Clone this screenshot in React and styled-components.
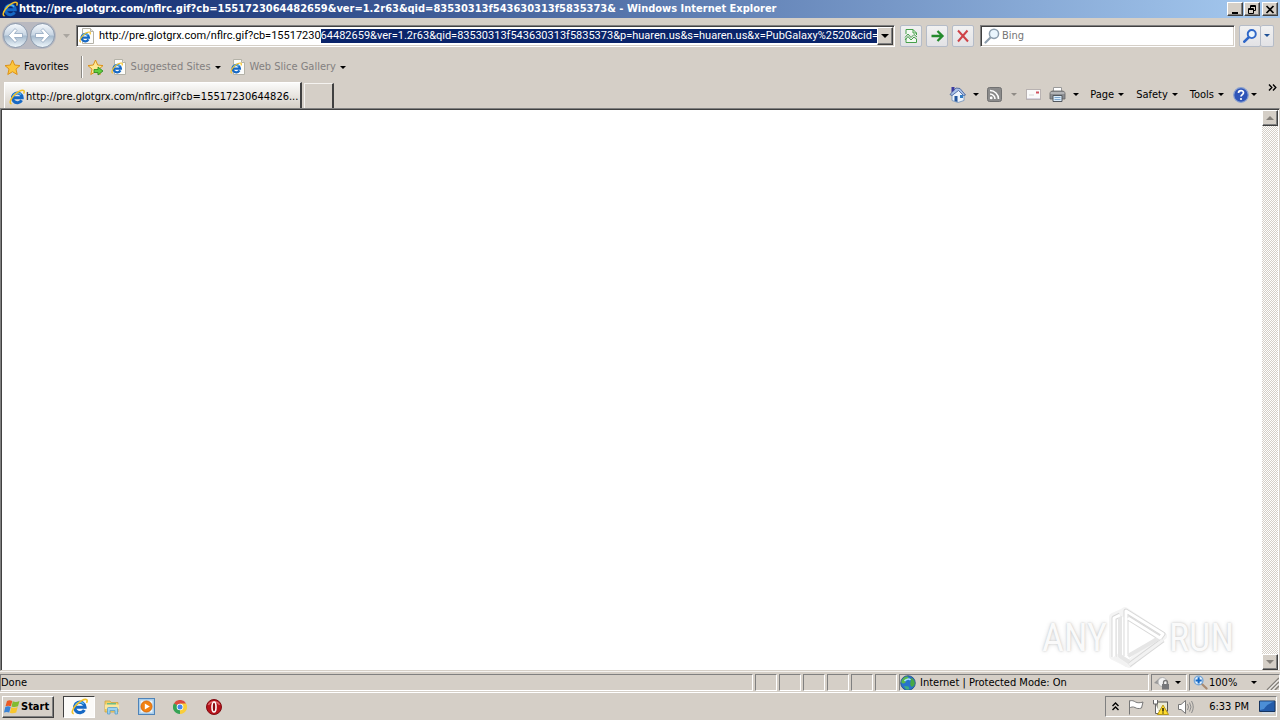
import React, { useLayoutEffect, useRef } from 'react';
import styled, { createGlobalStyle, css } from 'styled-components';

const face = '#d5cfc7';
const shadow = '#808080';
const dark = '#404040';

const Global = createGlobalStyle`
  * { box-sizing: border-box; }
  body { margin: 0; background: ${face}; overflow: hidden; }
  body, button, input {
    font-family: "DejaVu Sans Condensed", "DejaVu Sans", sans-serif;
    font-size: 11px;
    line-height: 14px;
    color: #000;
  }
  button { margin: 0; padding: 0; border: 0; background: none; }
  svg { display: block; flex: none; }
`;

const raised = css`
  background: ${face};
  border: 1px solid;
  border-color: #fff ${dark} ${dark} #fff;
  box-shadow: inset -1px -1px 0 ${shadow};
`;

const Window = styled.div`
  display: flex;
  flex-direction: column;
  min-height: 100vh;
  white-space: nowrap;
`;

/* Title bar */
const TitleBar = styled.header`
  display: flex;
  align-items: center;
  gap: 1px;
  height: 18px;
  padding: 0 2px 0 2px;
  background: linear-gradient(90deg, #0a246a, #a6caf0);
`;
const Title = styled.h1`
  flex: 1;
  min-width: 0;
  margin: 0;
  overflow: hidden;
  color: #fff;
  font-size: 11px;
  line-height: 16px;
  font-weight: bold;
`;
const CaptionButton = styled.button`
  ${raised}
  display: grid;
  place-items: center;
  width: 16px;
  height: 14px;
  margin-left: ${(p) => (p.$spaced ? 1 : 0)}px;
`;

/* Navigation row */
const NavRow = styled.div`
  display: flex;
  align-items: center;
  height: 35px;
  padding: 0 6px 0 2px;
`;
const BackForward = styled.div`
  display: flex;
  gap: 2px;
  padding: 1px;
  border-radius: 14px;
  background: #b9b9c0;
`;
const RoundButton = styled.button`
  display: grid;
  place-items: center;
  width: 25px;
  height: 25px;
  border: 1px solid #8c9bae;
  border-radius: 50%;
  background: linear-gradient(#f4f8fc, #c7d5e3 48%, #a5bacd 52%, #eef6fb);
`;
const HistoryButton = styled.button`
  display: grid;
  place-items: center;
  width: 20px;
  height: 20px;
`;
const Field = styled.div`
  display: flex;
  align-items: center;
  height: 22px;
  padding: 1px;
  background: #fff;
  border: 1px solid;
  border-color: ${shadow} #fff #fff ${shadow};
  box-shadow: inset 1px 1px 0 ${dark}, inset -1px -1px 0 ${face};
`;
const AddressField = styled(Field)`
  flex: 1;
  min-width: 0;
  margin-right: 5px;
  padding-left: 2px;
`;
const AddressInput = styled.input`
  flex: 1;
  min-width: 0;
  height: 14px;
  margin-left: 4px;
  padding: 0;
  border: 0;
  outline: 0;
  background: transparent;
  font-family: Roboto, sans-serif;
  caret-color: transparent;
  &::selection { background: #0a246a; color: #fff; }
`;
const DropButton = styled.button`
  ${raised}
  display: grid;
  place-items: center;
  width: 16px;
  height: 18px;
`;
const ToolButton = styled.button`
  display: grid;
  place-items: center;
  width: ${(p) => p.$width || 22}px;
  height: 22px;
  margin-right: ${(p) => (p.$joined ? 0 : 4)}px;
  border: 1px solid #b5bcc8;
  border-left-width: ${(p) => (p.$tail ? 0 : 1)}px;
  border-radius: 2px;
  background: linear-gradient(#f1f1f1, #e2e2e5);
`;
const SearchField = styled(Field)`
  width: 255px;
  margin: 0 4px 0 2px;
  padding-left: 3px;
`;
const SearchInput = styled.input`
  flex: 1;
  min-width: 0;
  height: 16px;
  padding: 0 2px;
  border: 0;
  outline: 0;
  background: transparent;
  &::placeholder { color: #757575; opacity: 1; }
`;

/* Favorites row */
const FavoritesRow = styled.nav`
  display: flex;
  align-items: center;
  height: 28px;
  padding-left: 4px;
`;
const TextButton = styled.button`
  display: flex;
  align-items: center;
  gap: ${(p) => p.$gap || 4}px;
  color: ${(p) => (p.$muted ? '#838080' : '#000')};
`;
const Divider = styled.span`
  width: 2px;
  height: 22px;
  margin: 0 4px 0 12px;
  border-left: 1px solid #8b8883;
  border-right: 1px solid #fff;
`;
const Links = styled.div`
  display: flex;
  align-items: center;
  margin-left: 7px;
  gap: 9px;
`;

/* Tab row */
const TabRow = styled.div`
  display: flex;
  align-items: flex-end;
  height: 27px;
  padding: 0 3px 0 4px;
`;
const Tab = styled.button`
  display: flex;
  align-items: center;
  gap: 1px;
  width: 298px;
  height: 26px;
  padding: 2px 0 0 4px;
  overflow: hidden;
  border: 1px solid;
  border-width: 1px 2px 0 1px;
  border-color: #fff ${dark} #fff #fff;
  background: linear-gradient(#fbfbfa, ${face});
`;
const NewTab = styled.button`
  width: 30px;
  height: 25px;
  margin-left: 2px;
  border: 1px solid;
  border-width: 1px 2px 0 1px;
  border-color: #f5f3f0 ${dark} #fff #f5f3f0;
`;
const Commands = styled.div`
  display: flex;
  align-items: center;
  height: 27px;
  margin-left: auto;
`;
const Command = styled(TextButton)`
  gap: ${(p) => p.$gap || 4}px;
  margin-right: ${(p) => p.$after || 0}px;
`;
const MoreButton = styled.button`
  align-self: flex-start;
  margin-top: 3px;
`;

/* Page area */
const Viewport = styled.main`
  display: flex;
  flex: 1;
  min-height: 300px;
  border: 1px solid;
  border-color: ${shadow} ${face} ${face} ${shadow};
  box-shadow: inset 1px 1px 0 ${dark};
  padding: 1px 1px 0 1px;
  background: #fff;
`;
const Page = styled.div`
  display: flex;
  flex: 1;
  align-items: flex-end;
  justify-content: flex-end;
`;
const Watermark = styled.div`
  display: flex;
  align-items: center;
  gap: 2px;
  padding-right: 28px;
  color: #fafafa;
  font-family: "Roboto Condensed", Roboto, sans-serif;
  font-size: 38px;
  line-height: 60px;
  text-shadow: 0 0 2px #c4c4c4, 0 0 5px #dcdcdc;
`;
const ScrollBar = styled.div`
  display: flex;
  flex-direction: column;
  justify-content: space-between;
  width: 16px;
  background: repeating-conic-gradient(${face} 0 25%, #fff 0 50%) 0 0 / 2px 2px;
`;
const ScrollButton = styled.button`
  ${raised}
  display: grid;
  place-items: center;
  height: 16px;
`;

/* Status bar */
const StatusBar = styled.footer`
  display: grid;
  grid-template-columns: 1fr repeat(6, 22px) 250px 36px 91px;
  gap: 2px;
  height: 22px;
  padding: 2px 0 1px;
  border-bottom: 1px solid #fff;
  border-top: 1px solid #f4f2ef;
`;
const Pane = styled.div`
  display: flex;
  align-items: center;
  gap: ${(p) => p.$gap || 2}px;
  padding-left: ${(p) => p.$pad || 0}px;
  overflow: hidden;
  border: 1px solid;
  border-color: ${shadow} #fff #fff ${shadow};
`;
const ZoomButton = styled.button`
  display: flex;
  flex: 1;
  align-items: center;
  justify-content: space-between;
`;
const Grip = styled.span`
  align-self: flex-end;
  margin-left: 8px;
`;

/* Taskbar */
const TaskBar = styled.footer`
  display: flex;
  align-items: center;
  height: 27px;
  padding: 0 3px 0 2px;
`;
const StartButton = styled.button`
  ${raised}
  display: flex;
  align-items: center;
  gap: 1px;
  width: 52px;
  height: 22px;
  margin-right: 9px;
  padding-left: 1px;
  font-weight: bold;
`;
const TaskButton = styled.button`
  display: grid;
  place-items: center;
  width: ${(p) => (p.$active ? 32 : 34)}px;
  height: 22px;
  ${(p) =>
    p.$active &&
    css`
      border: 1px solid;
      border-color: ${dark} #fff #fff ${dark};
      background: #fbfaf8;
    `}
`;
const Tray = styled.div`
  display: flex;
  align-items: center;
  width: 172px;
  height: 21px;
  margin-left: auto;
  padding: 0 0 0 6px;
  border: 1px solid;
  border-color: ${shadow} #fff #fff ${shadow};
`;
const TrayIcons = styled.div`
  display: flex;
  align-items: center;
  gap: 8px;
`;
const Clock = styled.time`
  margin: 0 10px 0 auto;
`;

const Caret = ({ color = '#000', size = 6, up }) => (
  <svg width={size} height={size > 6 ? 4 : 3} viewBox="0 0 6 3" preserveAspectRatio="none" aria-hidden="true">
    <path d={up ? 'M0 3H6L3 0Z' : 'M0 0H6L3 3Z'} fill={color} />
  </svg>
);

const IeGlyph = () => (
  <g fill="none">
    <path d="M12.600 11.200A4.900 4.900 0 1 1 13.200 8.700H5" stroke="#1668c4" strokeWidth="3" />
    <path d="M4 8A4.600 4.600 0 0 1 12 5.600" stroke="#4fb4f2" strokeWidth="1.600" />
    <path d="M2.600 14.800C.3 14.600 1 11 4 7.500 7.500 3.300 13 .2 14.900 1.700 15.500 2.500 15.200 3.500 14.600 4.600" stroke="#f3c126" strokeWidth="1.500" />
  </g>
);
const IeIcon = ({ size = 16 }) => (
  <svg width={size} height={size} viewBox="0 0 16 16" aria-hidden="true"><IeGlyph /></svg>
);
const IePage = () => (
  <svg width="16" height="16" viewBox="0 0 16 16" aria-hidden="true">
    <path d="M3.500 .5H11.500L14.500 3.500V15.500H3.500Z" fill="#fdfdfb" stroke="#b4b2a8" />
    <path d="M11.500 .5V3.500H14.500" fill="#e8e5da" stroke="#b4b2a8" />
    <g transform="translate(0 3) scale(.75)"><IeGlyph /></g>
  </svg>
);
const Arrow = ({ flip }) => (
  <svg width="17" height="17" viewBox="0 0 17 17" aria-hidden="true">
    <path
      transform={flip ? 'translate(17 0) scale(-1 1)' : undefined}
      d="M8 1.500 1.500 8.500 8 15.500 10 13.500 7.500 10.500H15.500V6.500H7.500L10 3.500Z"
      fill="#fff" stroke="#8fa5be" strokeWidth=".8"
    />
  </svg>
);
const Star = ({ add }) => (
  <svg width="17" height="17" viewBox="0 0 17 17" aria-hidden="true">
    <path d="M8.500 1 10.700 6 16 6.600 12 10.100 13.200 15.500 8.500 12.700 3.800 15.500 5 10.100 1 6.600 6.300 6Z"
      fill={add ? '#fde795' : '#fcc63d'} stroke="#dd9218" strokeLinejoin="round" />
    {add && <path d="M7 10.500H11V8L16 12 11 16V13.500H7Z" fill="#62cf3e" stroke="#29861c" strokeWidth=".8" />}
  </svg>
);
const Lens = ({ color = '#8d9eae', fill = '#eaf5fd', size = 16, plus, bold }) => (
  <svg width={size} height={size} viewBox="0 0 16 16" aria-hidden="true">
    <g transform={plus ? 'translate(16 0) scale(-1 1)' : undefined}>
      <path d="M6.500 9.500 1.500 14.500" stroke={plus ? '#a98a70' : color} strokeWidth={bold ? 3 : 2.2} strokeLinecap="round" />
      <circle cx="10" cy="5.800" r="4.600" fill={fill} stroke={color} strokeWidth={bold ? 2.2 : 1.5} />
    </g>
    {plus && <path d="M6 2.500V9.100M2.700 5.800H9.300" stroke="#1468c6" strokeWidth="2.200" />}
  </svg>
);
const Compat = () => (
  <svg width="14" height="16" viewBox="0 0 14 16" fill="none" stroke="#46a04a" aria-hidden="true">
    <path d="M2 6V1.500H9L12.500 5V7M2 10V14.500H12.500V11" fill="#f3faf2" />
    <path d="M9 1.500V5H12.500M1 9.500 4 6 7 9.500 10 6.500 13 9M1 12 4 8.500 7 12 10 9 13 11.500" />
  </svg>
);
const Go = () => (
  <svg width="16" height="16" viewBox="0 0 16 16" fill="none" stroke="#238a2c" strokeWidth="2.300" aria-hidden="true">
    <path d="M2.500 8H13M8.500 3 13.500 8 8.500 13" />
  </svg>
);
const Stop = () => (
  <svg width="14" height="14" viewBox="0 0 14 14" fill="none" stroke="#cf4247" strokeWidth="2" aria-hidden="true">
    <path d="M2 1.500 12 12.500M11.500 1.500 2 12.500" />
  </svg>
);
const Home = () => (
  <svg width="17" height="17" viewBox="0 0 17 17" aria-hidden="true">
    <path d="M3 8V14.500L9 16.500 15 14.500V8L10 3Z" fill="#edf3fb" stroke="#6e8fb9" strokeWidth=".8" />
    <path d="M1 8.500 7 2 11 2.500 16.500 9 14.500 9.500 9.500 4.500 3 9.500Z" fill="#a9c1e8" stroke="#3c5a96" strokeWidth=".8" />
    <path d="M2.500 1H5.500V4L2.500 6.500Z" fill="#3b3aa0" />
    <path d="M5.500 10H8.500V16L5.500 15Z" fill="#24579d" />
    <path d="M11 9H14V12H11Z" fill="#337dc4" />
  </svg>
);
const Feed = () => (
  <svg width="15" height="15" viewBox="0 0 15 15" fill="none" aria-hidden="true">
    <rect x=".5" y=".5" width="14" height="14" rx="2" fill="#8b8b8b" stroke="#717171" />
    <path d="M3 7A5 5 0 0 1 8 12M3 3.500A8.500 8.500 0 0 1 11.500 12" stroke="#fff" strokeWidth="1.600" />
    <circle cx="4.200" cy="10.900" r="1.400" fill="#fff" />
  </svg>
);
const Mail = () => (
  <svg width="15" height="11" viewBox="0 0 15 11" fill="none" aria-hidden="true">
    <rect x=".5" y=".5" width="14" height="10" fill="#fafafa" stroke="#b8b2b1" />
    <path d="M1 9.500H14" stroke="#d7d3df" /><path d="M10 3.500H13" stroke="#d0525f" strokeWidth="2" />
    <path d="M3 6H8" stroke="#d4d4d4" />
  </svg>
);
const Printer = () => (
  <svg width="17" height="17" viewBox="0 0 17 17" aria-hidden="true">
    <path d="M4.500 6V1.500H12.500V6" fill="#fff" stroke="#9a9a9a" />
    <path d="M1 6.500 3 5H14L16 6.500V13H1Z" fill="#8c8e92" stroke="#666" strokeWidth=".8" />
    <path d="M1.500 7H15.500" stroke="#dadada" />
    <path d="M4 9.500H13V15.500H4Z" fill="#dcecf9" stroke="#53585e" />
    <path d="M5.500 11.500H11.500M5.500 13.500H11.500" stroke="#7fa8cf" />
  </svg>
);
const Help = () => (
  <svg width="16" height="16" viewBox="0 0 16 16" aria-hidden="true">
    <circle cx="8" cy="8" r="7.300" fill="#2f55b8" stroke="#8aa1d0" strokeWidth="1.200" />
    <path d="M5.500 6C5.500 2.800 10.500 2.900 10.500 5.800 10.500 7.500 8 7.700 8 9.600" fill="none" stroke="#fff" strokeWidth="1.700" />
    <circle cx="8" cy="12" r="1.100" fill="#fff" />
  </svg>
);
const Chevrons = () => (
  <svg width="9" height="7" viewBox="0 0 9 7" fill="none" stroke="#000" strokeWidth="1.400" aria-hidden="true">
    <path d="M1 .5 3.800 3.500 1 6.500M5 .5 7.800 3.500 5 6.500" />
  </svg>
);
const Globe = () => (
  <svg width="16" height="16" viewBox="0 0 16 16" aria-hidden="true">
    <circle cx="8" cy="8" r="7.300" fill="#2872cc" stroke="#234b7c" strokeWidth=".8" />
    <path d="M2 5C4 1.500 8 .8 8.500 2.500 8 4.500 5 5 5.500 7.500 4 9 1.500 8.500 1.200 7Z" fill="#58b94a" />
    <path d="M10.500 3C13 3 15 6 14.800 9 13.500 12 12 12.500 10.500 10.500 9.500 8 11.500 6 10.500 3Z" fill="#47a843" />
    <path d="M4 11 8.500 11.500 9.500 14.500 6 14.500Z" fill="#3fae7d" />
    <path d="M4.500 6C6 4 9 3.500 10.500 5" stroke="#a6e0ff" strokeWidth="1.500" fill="none" />
  </svg>
);
const Lock = () => (
  <svg width="17" height="14" viewBox="0 0 17 14" aria-hidden="true">
    <path d="M0 7 6 1.500 11 3 7 9Z" fill="#999" /><circle cx="8.500" cy="6" r="4.500" fill="#f2f2f2" stroke="#b0b0b0" />
    <path d="M9.500 8V6.500A2 2 0 0 1 13.500 6.500V8" fill="none" stroke="#777" strokeWidth="1.300" />
    <rect x="8" y="8" width="7" height="5.500" fill="#76777a" />
  </svg>
);
const Windows = () => (
  <svg width="16" height="16" viewBox="0 0 16 16" aria-hidden="true">
    <path d="M3 2C5 .8 6.500 1.200 8.300 2L6.900 7.300C5.200 6.500 3.500 6.500 1.500 7.300Z" fill="#ea5a25" />
    <path d="M8.800 2.300C11 3.300 13 3 15.500 2L14 7.300C11.500 8.300 9.600 8.300 7.500 7.500Z" fill="#82bc32" />
    <path d="M1.300 7.900C3.200 7.100 5 7.100 6.700 7.900L5.200 13.500C3.500 12.700 2 12.700 0 13.500Z" fill="#3a83d6" />
    <path d="M7.300 8.200C9.300 9.100 11.300 8.900 13.700 7.900L12.200 13.500C10 14.500 8 14.500 5.900 13.700Z" fill="#f8c62d" />
  </svg>
);
const Folder = () => (
  <svg width="16" height="16" viewBox="0 0 16 16" aria-hidden="true">
    <path d="M1 2H6L7 3.500H14V13H1Z" fill="#f2cf66" stroke="#cda541" strokeWidth=".8" />
    <path d="M3 4H12V6H3Z" fill="#6dbc85" /><path d="M1 5.500H15V10H1Z" fill="#fbe69b" />
    <path d="M3.500 15V9.500Q3.500 8.500 4.500 8.500H12.500Q13.500 8.500 13.500 9.500V15H11V11.500H6V15Z" fill="#9ad2f0" stroke="#5b9fcb" strokeWidth=".8" />
  </svg>
);
const Media = () => (
  <svg width="17" height="17" viewBox="0 0 17 17" aria-hidden="true">
    <rect x=".5" y=".5" width="16" height="16" fill="#a8cdea" stroke="#4e83b8" />
    <rect x="2.500" y="2.500" width="12" height="12" fill="#e8f3fb" />
    <circle cx="8.500" cy="8.500" r="5.500" fill="#f28212" stroke="#d86a0b" /><path d="M6.800 5.500V11.500L11.800 8.500Z" fill="#fff" />
  </svg>
);
const Chrome = () => (
  <svg width="14" height="14" viewBox="0 0 14 14" aria-hidden="true">
    <path d="M7 7 .9 3.500A7 7 0 0 1 13.100 3.500Z" fill="#dd4b3e" />
    <path d="M7 7 13.100 3.500A7 7 0 0 1 7 14Z" fill="#f9ce3a" />
    <path d="M7 7V14A7 7 0 0 1 .9 3.500Z" fill="#36a355" />
    <path d="M7 3.500H13.100L10.200 8.500Z" fill="#f9ce3a" /><path d="M.9 3.500 4 9 7 7Z" fill="#36a355" />
    <circle cx="7" cy="7" r="3.300" fill="#fff" /><circle cx="7" cy="7" r="2.500" fill="#4587ed" />
  </svg>
);
const Opera = () => (
  <svg width="16" height="16" viewBox="0 0 16 16" aria-hidden="true">
    <circle cx="8" cy="8" r="7.500" fill="#b7131b" stroke="#7f0c12" />
    <path d="M2.500 6A6 5.500 0 0 1 13.500 6" fill="none" stroke="#df6a6d" strokeWidth="1.500" />
    <ellipse cx="8" cy="8" rx="2" ry="5" fill="#8b0c12" stroke="#fff" strokeWidth="1.600" />
  </svg>
);
const TrayChevron = () => (
  <svg width="7" height="9" viewBox="0 0 7 9" fill="none" stroke="#000" strokeWidth="1.400" aria-hidden="true">
    <path d="M.5 4 3.500 1 6.500 4M.5 8 3.500 5 6.500 8" />
  </svg>
);
const Flag = () => (
  <svg width="17" height="16" viewBox="0 0 17 16" aria-hidden="true">
    <path d="M2.500 1.500V15.500M2.500 2C5 1 7 2 8.500 3 10.500 4 13 4 16 3L14.500 9C12 10 9.500 9.500 8 8.500 6 7.500 4 8 2.500 9Z" fill="#fff" stroke="#777" />
  </svg>
);
const Network = () => (
  <svg width="17" height="16" viewBox="0 0 17 16" aria-hidden="true">
    <rect x="5" y="3" width="10.500" height="9" fill="#ecebd5" stroke="#555" />
    <path d="M1.500 1V5H5.500V1M3.500 5V14.500H8" fill="#fff" stroke="#666" />
    <path d="M11 6 16.500 15.500H5.500Z" fill="#ffdc2d" stroke="#a98800" strokeWidth=".8" />
    <path d="M11 9V12.500M11 13.500V14.500" stroke="#000" strokeWidth="1.300" />
  </svg>
);
const Speaker = () => (
  <svg width="17" height="16" viewBox="0 0 17 16" aria-hidden="true">
    <path d="M1.500 5.500H4L8.500 1.500V14.500L4 10.500H1.500Z" fill="#fff" stroke="#777" />
    <path d="M10.500 5Q12.500 8 10.500 11M12.500 3.500Q15.500 8 12.500 12.500M14.500 2Q18 8 14.500 14" fill="none" stroke="#8b8b8b" />
  </svg>
);
const Desktop = () => (
  <svg width="17" height="14" viewBox="0 0 17 14" aria-hidden="true">
    <path d="M.5 1H16V11.500H.5Z" fill="#245ba9" stroke="#16345f" />
    <path d="M1 1.500H15.500C11 3 7 5 5 9L1 10Z" fill="#4c8ed6" /><path d="M3 13H15" stroke="#cfdbe8" strokeWidth="1.500" />
  </svg>
);
const PlayLogo = () => (
  <svg width="58" height="64" viewBox="0 0 58 64" fill="none" strokeLinejoin="round" aria-hidden="true">
    <path d="M16 5 54 30 20 58 4 50V11L13 7Z" stroke="#f4f4f4" strokeWidth="8" />
    <path d="M5 51V12L11 9M17 50V5L54 28 51 32 19 12M20 59 54 34" stroke="#d8d8d8" strokeWidth="5" />
    <path d="M11 10V50L20 56M19 50 50 32" stroke="#e6e6e6" strokeWidth="4" />
    <path d="M5 51V12L11 9M17 50V5L54 28 51 32 19 12" stroke="#fff" strokeWidth="3" />
    <path d="M20 59 54 34M5 51 18 60" stroke="#f2f2f2" strokeWidth="3" />
  </svg>
);
const GripLines = () => (
  <svg width="13" height="13" viewBox="0 0 13 13" stroke="#85817b" strokeWidth="1.500" aria-hidden="true">
    <path d="M1 13 13 1M5 13 13 5M9 13 13 9" />
    <path d="M2.500 13 13 2.500M6.500 13 13 6.500" stroke="#fff" strokeWidth="1" />
  </svg>
);

const URL_START = 'http://pre.glotgrx.com/nflrc.gif?cb=15517230';
const URL_TEXT =
  URL_START + '64482659&ver=1.2r63&qid=83530313f543630313f5835373&p=huaren.us&s=huaren.us&x=PubGalaxy%2520&cid=';

export default function App() {
  const address = useRef(null);

  useLayoutEffect(() => {
    const box = address.current;
    box.focus({ preventScroll: true });
    box.setSelectionRange(URL_START.length, URL_TEXT.length, 'backward');
    box.scrollLeft = 0;
  }, []);

  return (
    <Window>
      <Global />
      <TitleBar>
        <IeIcon />
        <Title>http://pre.glotgrx.com/nflrc.gif?cb=1551723064482659&amp;ver=1.2r63&amp;qid=83530313f543630313f5835373&amp; - Windows Internet Explorer</Title>
        <CaptionButton aria-label="Minimize">
          <svg width="10" height="9" viewBox="0 0 10 9"><path d="M2 7H8V9H2Z" /></svg>
        </CaptionButton>
        <CaptionButton aria-label="Restore">
          <svg width="10" height="9" viewBox="0 0 10 9" fill="none" stroke="#000"><path d="M3.500 3V.5H8.500V5.500H7M3 1.500H9M1.500 3.500H6.500V8.500H1.500ZM1 4.500H7" /></svg>
        </CaptionButton>
        <CaptionButton aria-label="Close" $spaced>
          <svg width="10" height="9" viewBox="0 0 10 9" stroke="#000" strokeWidth="1.700"><path d="M1.500 1 8.500 8M8.500 1 1.500 8" /></svg>
        </CaptionButton>
      </TitleBar>

      <NavRow>
        <BackForward>
          <RoundButton aria-label="Back"><Arrow /></RoundButton>
          <RoundButton aria-label="Forward"><Arrow flip /></RoundButton>
        </BackForward>
        <HistoryButton aria-label="Recent pages"><Caret color="#aaa6a0" size={7} /></HistoryButton>
        <AddressField>
          <IePage />
          <AddressInput ref={address} aria-label="Address" defaultValue={URL_TEXT} spellCheck={false} />
          <DropButton aria-label="Show addresses"><Caret size={8} /></DropButton>
        </AddressField>
        <ToolButton aria-label="Compatibility view"><Compat /></ToolButton>
        <ToolButton aria-label="Go"><Go /></ToolButton>
        <ToolButton aria-label="Stop"><Stop /></ToolButton>
        <SearchField>
          <Lens />
          <SearchInput aria-label="Search" placeholder="Bing" />
        </SearchField>
        <ToolButton aria-label="Search" $joined><Lens color="#2f67c8" size={14} bold /></ToolButton>
        <ToolButton aria-label="Search options" $width={13} $joined $tail><Caret color="#1f5196" /></ToolButton>
      </NavRow>

      <FavoritesRow>
        <TextButton $gap={3}><Star />Favorites</TextButton>
        <Divider />
        <TextButton aria-label="Add to Favorites bar"><Star add /></TextButton>
        <Links>
          <TextButton $muted><IePage />Suggested Sites <Caret /></TextButton>
          <TextButton $muted><IePage />Web Slice Gallery <Caret /></TextButton>
        </Links>
      </FavoritesRow>

      <TabRow>
        <Tab><IeIcon />http://pre.glotgrx.com/nflrc.gif?cb=15517230644826...</Tab>
        <NewTab aria-label="New tab" />
        <Commands>
          <Command aria-label="Home" $gap={7} $after={8}><Home /><Caret /></Command>
          <Command aria-label="Feeds" $gap={9} $after={9}><Feed /><Caret color="#8f8b86" /></Command>
          <Command aria-label="Read mail" $after={8}><Mail /></Command>
          <Command aria-label="Print" $gap={7} $after={11}><Printer /><Caret /></Command>
          <Command $after={12}>Page <Caret /></Command>
          <Command $after={12}>Safety <Caret /></Command>
          <Command $after={9}>Tools <Caret /></Command>
          <Command aria-label="Help" $gap={2} $after={11}><Help /><Caret /></Command>
          <MoreButton aria-label="More commands"><Chevrons /></MoreButton>
        </Commands>
      </TabRow>

      <Viewport>
        <Page>
          <Watermark><span>ANY</span><PlayLogo /><span>RUN</span></Watermark>
        </Page>
        <ScrollBar>
          <ScrollButton aria-label="Scroll up"><Caret up color="#84807a" size={8} /></ScrollButton>
          <ScrollButton aria-label="Scroll down"><Caret color="#84807a" size={8} /></ScrollButton>
        </ScrollBar>
      </Viewport>

      <StatusBar>
        <Pane>Done</Pane>
        <Pane /><Pane /><Pane /><Pane /><Pane /><Pane />
        <Pane $gap={4}><Globe />Internet | Protected Mode: On</Pane>
        <Pane $gap={4} $pad={2}><Lock /><Caret /></Pane>
        <Pane $gap={1} $pad={3}>
          <Lens plus color="#77a7d8" size={15} />
          <ZoomButton>100%<Caret /></ZoomButton>
          <Grip><GripLines /></Grip>
        </Pane>
      </StatusBar>

      <TaskBar>
        <StartButton><Windows />Start</StartButton>
        <TaskButton aria-label="Internet Explorer" $active><IeIcon size={17} /></TaskButton>
        <TaskButton aria-label="File Explorer"><Folder /></TaskButton>
        <TaskButton aria-label="Media Player"><Media /></TaskButton>
        <TaskButton aria-label="Chrome"><Chrome /></TaskButton>
        <TaskButton aria-label="Opera"><Opera /></TaskButton>
        <Tray>
          <TrayIcons><TrayChevron /><Flag /><Network /><Speaker /></TrayIcons>
          <Clock>6:33 PM</Clock>
          <Desktop />
        </Tray>
      </TaskBar>
    </Window>
  );
}
